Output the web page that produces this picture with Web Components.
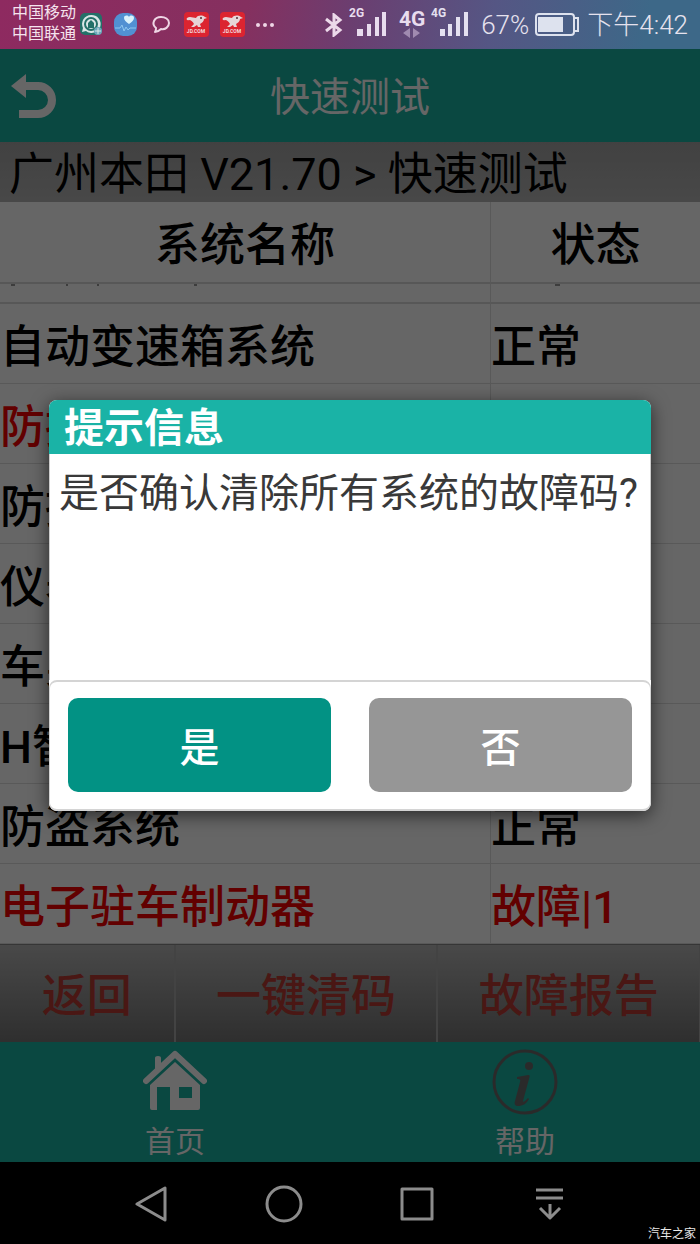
<!DOCTYPE html>
<html lang="zh-CN">
<head>
<meta charset="utf-8">
<meta name="viewport" content="width=device-width, initial-scale=1">
<title>快速测试</title>
<style>
    body {
        margin: 0;
        background: #000;
        font-family: Roboto, "Noto Sans CJK SC", sans-serif;
    }
</style>
</head>
<body>
<phone-shell>
    <status-bar slot="status"></status-bar>
    <app-bar>快速测试</app-bar>
    <crumb-bar>广州本田 V21.70 &gt; 快速测试</crumb-bar>
    <system-table></system-table>
    <action-bar>
        <action-button>返回</action-button>
        <action-button wide>一键清码</action-button>
        <action-button wide>故障报告</action-button>
    </action-bar>
    <tab-bar>
        <tab-item icon="home">首页</tab-item>
        <tab-item icon="info">帮助</tab-item>
    </tab-bar>
    <confirm-dialog slot="dialog">
        <span slot="title">提示信息</span>
        是否确认清除所有系统的故障码?
        <span slot="yes">是</span>
        <span slot="no">否</span>
    </confirm-dialog>
    <system-nav slot="nav">汽车之家</system-nav>
</phone-shell>

<script>
/* Every element below only needs its markup cloned into an open shadow root, so they share
this small base class. Subclasses define their own static template. */
class BaseElement extends HTMLElement {
    constructor() {
        super();
        this._shadowRoot = this.attachShadow({mode: "open"});
        this._shadowRoot.appendChild(this.constructor.template.content.cloneNode(true));
    }
}

function makeTemplate(html) {
    const template = document.createElement("template");
    template.innerHTML = html;
    return template;
}

/* Overall frame: status bar, the app with its modal layer, and the system keys. */
class PhoneShell extends BaseElement {
    static template = makeTemplate(`
        <div class="stage">
            <slot name="status"></slot>
            <main><slot></slot><slot name="dialog"></slot></main>
            <slot name="nav"></slot>
        </div>
        <style>
        :host {
            display: block;
        }
        .stage {
            display: flex;
            flex-direction: column;
            min-height: 100vh;
        }
        main {
            position: relative;
            flex: 1;
            display: flex;
            flex-direction: column;
            background: #fff;
        }
        </style>
    `);
}
customElements.define("phone-shell", PhoneShell);

const jdIcon = `
    <svg width="25" height="25" viewBox="0 0 25 25" aria-hidden="true">
        <rect width="25" height="25" rx="4" fill="#dc2430"/>
        <path d="M3 6c3-2 6 0 9 0 2-3 6-3 9-1l2 1-3 1c0 2-2 4-4 5l1 3h-3l-1-2-3 2H7l3-3c-1-2-3-4-5-4-2 1-3-1-2-2z" fill="#e6d5d8"/>
        <circle cx="17" cy="6" r="1" fill="#503038"/>
        <text x="12" y="21" text-anchor="middle" font-size="5" font-weight="700" fill="#f3dadd">JD.COM</text>
    </svg>`;

class StatusBar extends BaseElement {
    static template = makeTemplate(`
        <div class="carriers"><div>中国移动</div><div>中国联通</div></div>
        <div class="apps">
            <svg width="23" height="23" viewBox="0 0 23 23" aria-hidden="true">
                <rect width="22" height="22" rx="5" fill="#237068"/>
                <path d="M11 2a9 9 0 1 1-5 16l-4 1 1-4A9 9 0 0 1 11 2z" fill="#d9e6e6"/>
                <circle cx="11" cy="11" r="6" fill="none" stroke="#237068" stroke-width="2"/>
                <path d="M8 10l3-3 3 3v5H8z" fill="#237068"/>
                <circle cx="18" cy="18" r="4" fill="#6ba8bb"/>
                <path d="M15 18h6M18 15v6" stroke="#d9e6e6"/>
            </svg>
            <svg width="23" height="23" viewBox="0 0 23 23" aria-hidden="true">
                <rect width="23" height="23" rx="9" fill="#5191d2"/>
                <path d="M15 11c-3-2-5-4-5-6 0-3 4-3 5-1 1-2 5-2 5 1 0 2-2 4-5 6z" fill="#d9f2fb"/>
                <path d="M1 15h5l2-3 2 6 2-4 2 3 2-2h6" fill="none" stroke="#8dc7ef"/>
            </svg>
            <svg width="25" height="17" viewBox="-4 0 25 17" aria-hidden="true">
                <path d="M9 1c4 0 8 2 8 6s-4 7-8 6c-2 2-4 3-6 3 1-1 1-3 1-4-5-4-2-11 5-11z" fill="none" stroke="#efd6e5" stroke-width="2" stroke-linejoin="round"/>
            </svg>
            ${jdIcon}
            ${jdIcon}
            <svg width="18" height="4" viewBox="0 0 18 4" fill="#efd6e5" aria-hidden="true">
                <circle cx="2" cy="2" r="2"/><circle cx="9" cy="2" r="2"/><circle cx="16" cy="2" r="2"/>
            </svg>
        </div>
        <div class="radio">
            <svg class="bt" width="18" height="24" viewBox="0 0 18 24" aria-hidden="true">
                <path d="M1 6l14 11-6 5V2l6 5L1 18" fill="none" stroke="#ecd9ea" stroke-width="3"/>
            </svg>
            <svg width="38" height="30" viewBox="0 0 38 30" fill="#e8dcee">
                <text x="0" y="10" font-size="12" font-weight="700">2G</text>
                <path d="M8 22h6v7H8zM18 17h4v12h-4zM26 10h4v19h-4zM33 5h4v24h-4z"/>
            </svg>
            <svg class="data" width="26" height="30" viewBox="0 0 26 30" fill="#e8dcee">
                <text x="0" y="19" font-size="21" font-weight="700">4G</text>
                <path d="M11 21v10l-7-5zM14 21v10l7-5z" fill="#a08ab0"/>
            </svg>
            <svg width="38" height="30" viewBox="0 0 38 30" fill="#e4e0f0">
                <text x="0" y="10" font-size="12" font-weight="700">4G</text>
                <path d="M9 22h5v7H9zM17 17h4v12h-4zM25 10h4v19h-4zM33 5h4v24h-4z"/>
            </svg>
        </div>
        <div class="power">
            <span>67%</span>
            <svg width="44" height="23" viewBox="0 0 44 23" aria-hidden="true">
                <rect x="1" y="1" width="38" height="21" rx="3" fill="none" stroke="#dde2ee" stroke-width="2"/>
                <rect x="3" y="4" width="25" height="15" fill="#dde2ee"/>
                <path d="M40 5h3v13h-3" fill="none" stroke="#dde2ee" stroke-width="2"/>
            </svg>
        </div>
        <time>下午4:42</time>
        <style>
        :host {
            display: flex;
            align-items: center;
            height: 49px;
            padding: 0 12px;
            background: linear-gradient(100deg, #8e2a60 0%, #85305f 35%, #6b3e70 50%, #555684 70%, #3d6888 92%);
            color: #e6e2ee;
        }
        svg {
            display: block;
            flex: none;
        }
        .carriers {
            font-size: 16px;
            line-height: 21px;
            padding-bottom: 4px;
            color: #f5e3ee;
            white-space: nowrap;
        }
        .apps {
            display: flex;
            align-items: center;
            gap: 11px;
            margin-left: 4px;
        }
        .radio {
            display: flex;
            align-items: center;
            gap: 6px;
            margin-left: auto;
            padding-bottom: 6px;
        }
        .bt {
            margin-top: 6px;
        }
        .data {
            margin-left: 6px;
            overflow: visible;
        }
        .power {
            display: flex;
            align-items: center;
            gap: 6px;
            margin-left: 12px;
        }
        .power span,
        time {
            font-size: 26px;
            font-weight: 300;
            line-height: 30px;
            white-space: nowrap;
        }
        time {
            margin-left: 8px;
        }
        </style>
    `);
}
customElements.define("status-bar", StatusBar);

class AppBar extends BaseElement {
    static template = makeTemplate(`
        <button type="button" aria-label="返回上一页">
            <svg width="52" height="50" viewBox="0 0 52 50" aria-hidden="true">
                <path d="M16 15h14a14 14 0 0 1 0 28H11" fill="none" stroke="#fff" stroke-width="8"/>
                <path d="M3 15L18 3v24z" fill="#fff"/>
            </svg>
        </button>
        <h1><slot></slot></h1>
        <style>
        :host {
            display: grid;
            grid-template-columns: 1fr auto 1fr;
            align-items: center;
            height: 93px;
            background: #1ab3a3;
            color: #fff;
        }
        button {
            justify-self: start;
            margin: 0;
            padding: 0 8px;
            border: 0;
            background: none;
        }
        svg {
            display: block;
        }
        h1 {
            margin: 0;
            padding-top: 4px;
            font-size: 40px;
            font-weight: 400;
            line-height: 60px;
        }
        </style>
    `);
}
customElements.define("app-bar", AppBar);

class CrumbBar extends BaseElement {
    static template = makeTemplate(`
        <slot></slot>
        <style>
        :host {
            display: block;
            box-sizing: border-box;
            height: 60px;
            padding: 4px 9px 0;
            background: linear-gradient(#a4a4a4, #b4b4b4);
            color: #000;
            font-size: 45px;
            line-height: 58px;
            white-space: nowrap;
        }
        </style>
    `);
}
customElements.define("crumb-bar", CrumbBar);

/* The list is scrolled, so the first body row only shows the last few pixels of its cells. */
class SystemTable extends BaseElement {
    static rows = [
        ["自动变速箱系统", "正常"],
        ["防抱", "", true],
        ["防抱", ""],
        ["仪表", ""],
        ["车身", ""],
        ["H智", ""],
        ["防盗系统", "正常"],
        ["电子驻车制动器", "故障|1", true],
    ];

    static template = makeTemplate(`
        <table>
            <thead>
                <tr><th scope="col">系统名称</th><th scope="col">状态</th></tr>
            </thead>
            <tbody>
                <tr class="cut">
                    <td><svg width="200" height="2" viewBox="0 0 200 2" aria-hidden="true"><path d="M11 1h4M66 1h2M97 1h2M194 1h3"/></svg></td>
                    <td><svg width="80" height="2" viewBox="0 0 80 2" aria-hidden="true"><path d="M64 1h5"/></svg></td>
                </tr>
            </tbody>
        </table>
        <style>
        :host {
            flex: 1;
            display: flex;
            background: #fff;
            color: #000;
        }
        table {
            width: 100%;
            table-layout: fixed;
            border-collapse: separate;
            border-spacing: 0;
            font-size: 45px;
            font-weight: 500;
            line-height: 60px;
        }
        th, td {
            box-sizing: border-box;
            height: 80px;
            padding: 8px 0 0;
            border-bottom: 1px solid #dedede;
            font-weight: inherit;
            text-align: left;
            white-space: nowrap;
        }
        th {
            height: 82px;
            border-bottom: 2px solid #dadada;
            text-align: center;
        }
        th:first-child {
            width: 70%;
        }
        th:last-child, td:last-child {
            border-left: 1px solid #dedede;
        }
        .cut td {
            height: 20px;
            padding: 0;
            border-bottom: 2px solid #dadada;
            line-height: 0;
            vertical-align: top;
        }
        .cut svg {
            display: block;
        }
        .cut path {
            stroke: #333;
        }
        .fault {
            color: #f60000;
        }
        </style>
    `);

    constructor() {
        super();
        const body = this._shadowRoot.querySelector("tbody");
        SystemTable.rows.forEach(([name, state, fault]) => {
            const row = body.insertRow();
            row.className = fault ? "fault" : "";
            row.insertCell().textContent = name;
            row.insertCell().textContent = state;
        });
    }
}
customElements.define("system-table", SystemTable);

class ActionBar extends BaseElement {
    static template = makeTemplate(`
        <slot></slot>
        <style>
        :host {
            display: flex;
            height: 98px;
            box-sizing: border-box;
            border-top: 1px solid #888;
            background: linear-gradient(#b6b6b6, #757575);
        }
        </style>
    `);
}
customElements.define("action-bar", ActionBar);

class ActionButton extends BaseElement {
    static template = makeTemplate(`
        <button type="button"><slot></slot></button>
        <style>
        :host {
            flex: 2 1 0;
            display: flex;
            border-right: 2px solid #a8a8a8;
        }
        :host([wide]) {
            flex-grow: 3;
        }
        :host(:last-child) {
            border-right-width: 1px;
        }
        button {
            flex: 1;
            padding: 6px 0 0;
            border: 0;
            background: none;
            color: #b83a34;
            font: inherit;
            font-size: 45px;
            font-weight: 500;
            line-height: 60px;
        }
        </style>
    `);
}
customElements.define("action-button", ActionButton);

class TabBar extends BaseElement {
    static template = makeTemplate(`
        <nav><slot></slot></nav>
        <style>
        :host {
            display: block;
            background: #1ab3a3;
        }
        nav {
            display: flex;
        }
        </style>
    `);
}
customElements.define("tab-bar", TabBar);

class TabItem extends BaseElement {
    static template = makeTemplate(`
        <a href="#"><span class="icon"></span><slot></slot></a>
        <style>
        :host {
            flex: 1;
            display: block;
        }
        a {
            display: flex;
            flex-direction: column;
            align-items: center;
            padding-top: 7px;
            color: #fff;
            font-size: 30px;
            line-height: 40px;
            text-decoration: none;
        }
        .icon {
            height: 73px;
        }
        svg {
            display: block;
        }
        </style>
    `);

    static icons = {
        home: `
            <svg width="64" height="62" viewBox="0 0 64 62" aria-hidden="true">
                <path d="M12 22V9q0-2 3-2t3 2v8z" fill="#fff"/>
                <path d="M3 32L32 5l29 27" fill="none" stroke="#fff" stroke-width="6" stroke-linecap="round" stroke-linejoin="round"/>
                <path d="M32 13l25 23v23q0 2-2 2H27V38H14v23H9q-2 0-2-2V36zM36 38v11h13V38z" fill="#fff" fill-rule="evenodd"/>
            </svg>`,
        info: `
            <svg width="66" height="66" viewBox="0 0 66 66" fill="#6a6a6a" aria-hidden="true">
                <circle cx="33" cy="33" r="31" fill="none" stroke="#6a6a6a" stroke-width="3"/>
                <circle cx="37" cy="17" r="4"/>
                <path d="M25 28l11-2c2 0 2 1 1 4l-6 22c0 2 2 0 5-3l1 1c-3 5-6 7-11 7-3 0-4-2-3-5l5-19c1-3-1-3-3-3z"/>
            </svg>`,
    };

    connectedCallback() {
        this._shadowRoot.querySelector(".icon").innerHTML = TabItem.icons[this.getAttribute("icon")];
    }
}
customElements.define("tab-item", TabItem);

/* Modal box over a dimmed layer. Covers its positioned parent. */
class ConfirmDialog extends BaseElement {
    static template = makeTemplate(`
        <section role="alertdialog" aria-modal="true" aria-labelledby="title" aria-describedby="text">
            <h2 id="title"><slot name="title"></slot></h2>
            <p id="text"><slot></slot></p>
            <footer>
                <button type="button" class="yes"><slot name="yes"></slot></button>
                <button type="button" class="no"><slot name="no"></slot></button>
            </footer>
        </section>
        <style>
        :host {
            position: absolute;
            inset: 0;
            display: flex;
            align-items: center;
            justify-content: center;
            background: rgba(0, 0, 0, .6);
        }
        section {
            box-sizing: border-box;
            width: 86%;
            overflow: hidden;
            border-radius: 8px;
            background: #fff;
            box-shadow: 0 4px 18px rgba(0, 0, 0, .6);
        }
        h2 {
            box-sizing: border-box;
            height: 54px;
            margin: 0;
            padding: 2px 15px 0;
            background: #1ab3a6;
            color: #fff;
            font-size: 40px;
            font-weight: 700;
            line-height: 54px;
        }
        p {
            box-sizing: border-box;
            min-height: 226px;
            margin: 0;
            padding: 10px 0 0 9px;
            border: solid #ccc;
            border-width: 0 1px;
            color: #393939;
            font-size: 40px;
            line-height: 60px;
            white-space: nowrap;
        }
        footer {
            display: flex;
            gap: 38px;
            padding: 16px 18px 17px;
            border: 2px solid #d4d4d4;
            border-width: 2px 1px;
            border-radius: 8px;
        }
        button {
            flex: 1;
            height: 94px;
            padding: 0;
            border: 0;
            border-radius: 10px;
            color: #fff;
            font: inherit;
            font-size: 40px;
            font-weight: 500;
        }
        .yes {
            background: #029284;
        }
        .no {
            background: #969696;
        }
        </style>
    `);
}
customElements.define("confirm-dialog", ConfirmDialog);

/* Android soft keys, with the site mark in the lower right corner. */
class SystemNav extends BaseElement {
    static template = makeTemplate(`
        <button type="button" aria-label="后退">
            <svg width="34" height="36" viewBox="0 0 34 36"><path d="M3 18L31 2v32z"/></svg>
        </button>
        <button type="button" aria-label="主屏幕">
            <svg width="38" height="38" viewBox="0 0 38 38"><circle cx="19" cy="19" r="17"/></svg>
        </button>
        <button type="button" aria-label="最近任务">
            <svg width="34" height="34" viewBox="0 0 34 34"><rect x="2" y="2" width="30" height="30"/></svg>
        </button>
        <button type="button" aria-label="通知栏">
            <svg width="30" height="34" viewBox="0 0 30 34"><path d="M1 3h27M1 11h27M15 17v14M5 21l10 10 10-10"/></svg>
        </button>
        <small><slot></slot></small>
        <style>
        :host {
            position: relative;
            display: flex;
            height: 82px;
            padding: 0 12%;
            background: #000;
        }
        button {
            flex: 1;
            display: flex;
            align-items: center;
            justify-content: center;
            padding: 2px 0 0;
            border: 0;
            background: none;
        }
        svg {
            fill: none;
            stroke: #8c8c8c;
            stroke-width: 3;
            stroke-linejoin: round;
        }
        small {
            position: absolute;
            right: 4px;
            bottom: 2px;
            color: #e8e8e8;
            font-size: 12px;
            line-height: 16px;
        }
        </style>
    `);
}
customElements.define("system-nav", SystemNav);
</script>
</body>
</html>
